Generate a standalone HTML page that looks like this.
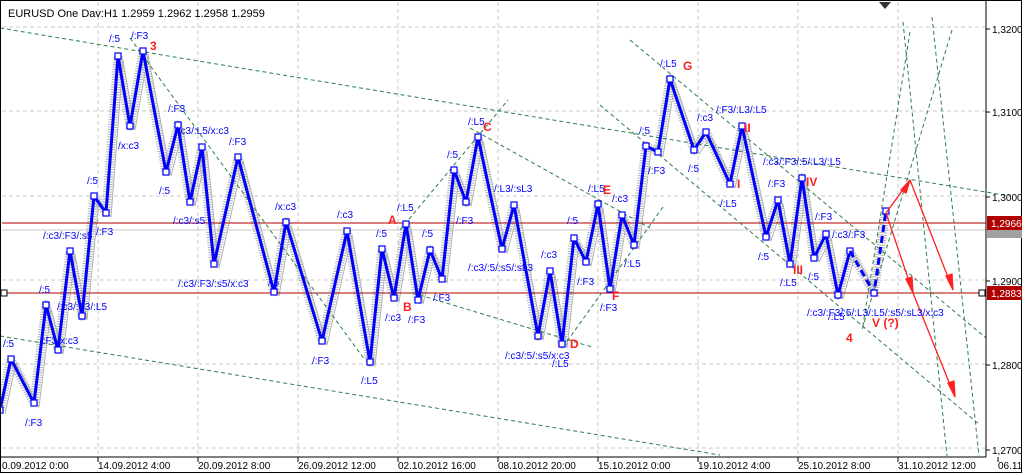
<!DOCTYPE html>
<html><head><meta charset="utf-8"><style>
html,body{margin:0;padding:0;background:#fff;}
svg{display:block;font-family:"Liberation Sans",sans-serif;}
.b{fill:#0000ff;font-size:10px;}
.r{fill:#ff2020;font-size:12px;font-weight:bold;}
.ax{fill:#000;font-size:10px;}
</style></head><body>
<svg width="1022" height="473" viewBox="0 0 1022 473" xmlns="http://www.w3.org/2000/svg">
<defs>
<marker id="m" markerWidth="8" markerHeight="8" refX="4" refY="4" markerUnits="userSpaceOnUse">
<rect x="1" y="1" width="6" height="6" fill="#fff" stroke="#0000ff" stroke-width="1.2"/>
</marker>
</defs>
<rect width="1022" height="473" fill="#fff"/>
<g stroke="#c8c8c8" stroke-dasharray="4,3" stroke-width="1">
<line x1="98" y1="2" x2="98" y2="457"/><line x1="198" y1="2" x2="198" y2="457"/><line x1="298" y1="2" x2="298" y2="457"/><line x1="398" y1="2" x2="398" y2="457"/><line x1="498" y1="2" x2="498" y2="457"/><line x1="598" y1="2" x2="598" y2="457"/><line x1="698" y1="2" x2="698" y2="457"/><line x1="798" y1="2" x2="798" y2="457"/><line x1="898" y1="2" x2="898" y2="457"/>
<line x1="2" y1="27" x2="986" y2="27"/><line x1="2" y1="111" x2="986" y2="111"/><line x1="2" y1="196" x2="986" y2="196"/><line x1="2" y1="280" x2="986" y2="280"/><line x1="2" y1="364" x2="986" y2="364"/><line x1="2" y1="448" x2="986" y2="448"/>
</g>
<g fill="none" stroke="#b0b0b0" stroke-linejoin="round">
<polyline stroke-width="9" stroke-dasharray="1,1.5" points="0,410 11,359 34,403 46,305 58,350 70,251 82,316 94,196 106,213 118,56 130,126 143,51 166,172 178,125 190,202 202,147 214,264 238,157 274,292 286,222 322,341 347,231 370,362 382,249 394,298 406,224 418,300 430,250 442,279 454,170 466,202 478,137 502,249 514,205 538,336 550,271 562,344 574,238 586,262 598,204 610,289 622,215 634,245 646,146 658,152 670,79 694,150 706,132 730,184 742,126 766,237 778,200 790,264 802,178 814,258 826,234 838,295 850,251 874,293 886,211"/>
<polyline stroke-width="1" transform="translate(5,4)" points="0,410 11,359 34,403 46,305 58,350 70,251 82,316 94,196 106,213 118,56 130,126 143,51 166,172 178,125 190,202 202,147 214,264 238,157 274,292 286,222 322,341 347,231 370,362 382,249 394,298 406,224 418,300 430,250 442,279 454,170 466,202 478,137 502,249 514,205 538,336 550,271 562,344 574,238 586,262 598,204 610,289 622,215 634,245 646,146 658,152 670,79 694,150 706,132 730,184 742,126 766,237 778,200 790,264 802,178 814,258 826,234 838,295 850,251 874,293"/>
</g>
<line x1="2" y1="230" x2="986" y2="230" stroke="#c8c8c8"/>
<line x1="2" y1="223" x2="986" y2="223" stroke="#b00000"/>
<line x1="2" y1="293" x2="986" y2="293" stroke="#b00000"/>
<g stroke="#2e7d4f" stroke-dasharray="4,3" stroke-width="1" fill="none">
<line x1="0" y1="28" x2="1010" y2="196"/>
<line x1="0" y1="336" x2="720" y2="455"/>
<line x1="130" y1="38" x2="365" y2="360"/>
<line x1="400" y1="230" x2="508" y2="100"/>
<line x1="470" y1="128" x2="650" y2="228"/>
<line x1="413" y1="293" x2="592" y2="347"/>
<line x1="563" y1="347" x2="663" y2="207"/>
<line x1="630" y1="40" x2="986" y2="338"/>
<line x1="600" y1="105" x2="980" y2="425"/>
<line x1="910" y1="32" x2="863" y2="325"/>
<line x1="903" y1="22" x2="947" y2="456"/>
<line x1="932" y1="17" x2="979" y2="456"/>
<line x1="952" y1="30" x2="862" y2="330"/>
</g>
<polyline fill="none" stroke="#0000ff" stroke-width="3" stroke-linejoin="round" marker-start="url(#m)" marker-mid="url(#m)" marker-end="url(#m)" points="0,410 11,359 34,403 46,305 58,350 70,251 82,316 94,196 106,213 118,56 130,126 143,51 166,172 178,125 190,202 202,147 214,264 238,157 274,292 286,222 322,341 347,231 370,362 382,249 394,298 406,224 418,300 430,250 442,279 454,170 466,202 478,137 502,249 514,205 538,336 550,271 562,344 574,238 586,262 598,204 610,289 622,215 634,245 646,146 658,152 670,79 694,150 706,132 730,184 742,126 766,237 778,200 790,264 802,178 814,258 826,234 838,295 850,251"/>
<polyline fill="none" stroke="#0000ff" stroke-width="3" stroke-dasharray="7,4" marker-mid="url(#m)" marker-end="url(#m)" points="850,251 874,293 886,211"/>
<g stroke="#ff2020" stroke-width="1.3" fill="#ff2020">
<line x1="886" y1="213" x2="910" y2="180"/><line x1="910" y1="180" x2="953" y2="290"/><line x1="886" y1="213" x2="913" y2="293"/><line x1="913" y1="293" x2="955" y2="397"/>
<polygon points="910,180 901,190 906,193"/><polygon points="953,290 946,276 952,274"/><polygon points="913,293 906,279 912,277"/><polygon points="955,397 948,383 954,381"/>
</g>
<g class="b">
<text x="109" y="42">/:5</text><text x="131" y="39">/:F3</text><text x="168" y="112">/:F3</text><text x="175" y="134">/:c3/:L5/x:c3</text><text x="118" y="149">/x:c3</text><text x="229" y="145">/:F3</text><text x="87" y="184">/:5</text><text x="159" y="194">/:5</text><text x="173" y="224">/:c3/:s5</text><text x="275" y="210">/x:c3</text><text x="43" y="239">/:c3/:F3/:s5</text><text x="96" y="235">/:F3</text><text x="337" y="218">/:c3</text><text x="39" y="293">/:5</text><text x="376" y="237">/:5</text><text x="397" y="211">/:L5</text><text x="468" y="125">/:L5</text><text x="447" y="158">/:5</text><text x="422" y="237">/:5</text><text x="456" y="224">/:F3</text><text x="494" y="192">/:L3/:sL3</text><text x="178" y="287">/:c3/:F3/:s5/x:c3</text><text x="268" y="286">/:5</text><text x="57" y="310">/:c3/:F3/:L5</text><text x="40" y="344">/:F3/x:c3</text><text x="3" y="347">/:5</text><text x="312" y="364">/:F3</text><text x="361" y="384">/:L5</text><text x="25" y="426">/:F3</text><text x="385" y="321">/:c3</text><text x="408" y="323">/:F3</text><text x="433" y="301">/:F3</text><text x="468" y="271">/:c3/:5/:s5/:sL3</text><text x="541" y="258">/:c3</text><text x="505" y="359">/:c3/:5/:s5/x:c3</text><text x="552" y="367">/:L5</text><text x="567" y="224">/:5</text><text x="588" y="192">/:L5</text><text x="612" y="202">/:c3</text><text x="577" y="285">/:F3</text><text x="624" y="267">/:L5</text><text x="600" y="311">/:F3</text><text x="639" y="134">/:5</text><text x="648" y="174">/:F3</text><text x="660" y="67">/:L5</text><text x="697" y="121">/:c3</text><text x="716" y="113">/:F3/:L3/:L5</text><text x="688" y="172">/:5</text><text x="720" y="207">/:L5</text><text x="763" y="165">/:c3/:F3/:5/:L3/:L5</text><text x="768" y="187">/:F3</text><text x="758" y="260">/:5</text><text x="780" y="286">/:L5</text><text x="808" y="280">/:5</text><text x="815" y="220">/:F3</text><text x="832" y="238">/:c3/:F3</text><text x="807" y="316">/:c3/:F3/:5/:L3/:L5/:s5/:sL3/x:c3</text><text x="828" y="320">/:L5</text>
</g>
<g class="r">
<text x="150" y="50">3</text><text x="388" y="224">A</text><text x="403" y="311">B</text><text x="483" y="131">C</text><text x="570" y="348">D</text><text x="603" y="194">E</text><text x="612" y="300">F</text><text x="683" y="70">G</text><text x="744" y="132">II</text><text x="737" y="188">I</text><text x="806" y="186">IV</text><text x="793" y="274">III</text><text x="872" y="327">V (?)</text><text x="846" y="342">4</text>
</g>
<rect x="0.5" y="0.5" width="1021" height="472" fill="none" stroke="#000"/>
<line x1="986" y1="0" x2="986" y2="457" stroke="#000"/>
<line x1="0" y1="457" x2="986" y2="457" stroke="#000"/>
<polygon points="879,2 891,2 885,9" fill="#333"/>
<text x="8" y="17" style="font-size:11px" fill="#000">EURUSD One Dav:H1  1.2959  1.2962  1.2958  1.2959</text>
<g stroke="#000">
<line x1="986" y1="29" x2="990" y2="29"/><line x1="986" y1="112" x2="990" y2="112"/><line x1="986" y1="197" x2="990" y2="197"/><line x1="986" y1="281" x2="990" y2="281"/><line x1="986" y1="365" x2="990" y2="365"/><line x1="986" y1="450" x2="990" y2="450"/>
</g>
<g class="ax">
<text x="992" y="33">1,3200</text><text x="992" y="116">1,3100</text><text x="992" y="201">1,3000</text><text x="992" y="285">1,2900</text><text x="992" y="369">1,2800</text><text x="992" y="454">1,2700</text>
</g>
<rect x="987" y="230" width="35" height="8" fill="#a0a0a0"/>
<rect x="987" y="216" width="35" height="14" fill="#b00000"/>
<text x="991" y="227" fill="#fff" style="font-size:10px">1,2966</text>
<rect x="987" y="286" width="35" height="14" fill="#b00000"/>
<text x="991" y="297" fill="#fff" style="font-size:10px">1,2883</text>
<rect x="979" y="290" width="6" height="6" fill="#fff" stroke="#000"/>
<rect x="1" y="290" width="6" height="6" fill="#fff" stroke="#000"/>
<g stroke="#000">
<line x1="98" y1="457" x2="98" y2="462"/><line x1="198" y1="457" x2="198" y2="462"/><line x1="298" y1="457" x2="298" y2="462"/><line x1="398" y1="457" x2="398" y2="462"/><line x1="498" y1="457" x2="498" y2="462"/><line x1="598" y1="457" x2="598" y2="462"/><line x1="698" y1="457" x2="698" y2="462"/><line x1="798" y1="457" x2="798" y2="462"/><line x1="898" y1="457" x2="898" y2="462"/><line x1="998" y1="457" x2="998" y2="462"/>
</g>
<g class="ax">
<text x="2" y="469">0.09.2012 0:00</text><text x="98" y="469">14.09.2012 4:00</text><text x="198" y="469">20.09.2012 8:00</text><text x="298" y="469">26.09.2012 12:00</text><text x="398" y="469">02.10.2012 16:00</text><text x="498" y="469">08.10.2012 20:00</text><text x="598" y="469">15.10.2012 0:00</text><text x="698" y="469">19.10.2012 4:00</text><text x="798" y="469">25.10.2012 8:00</text><text x="898" y="469">31.10.2012 12:00</text><text x="998" y="469">06.11</text>
</g>
</svg>
</body></html>
